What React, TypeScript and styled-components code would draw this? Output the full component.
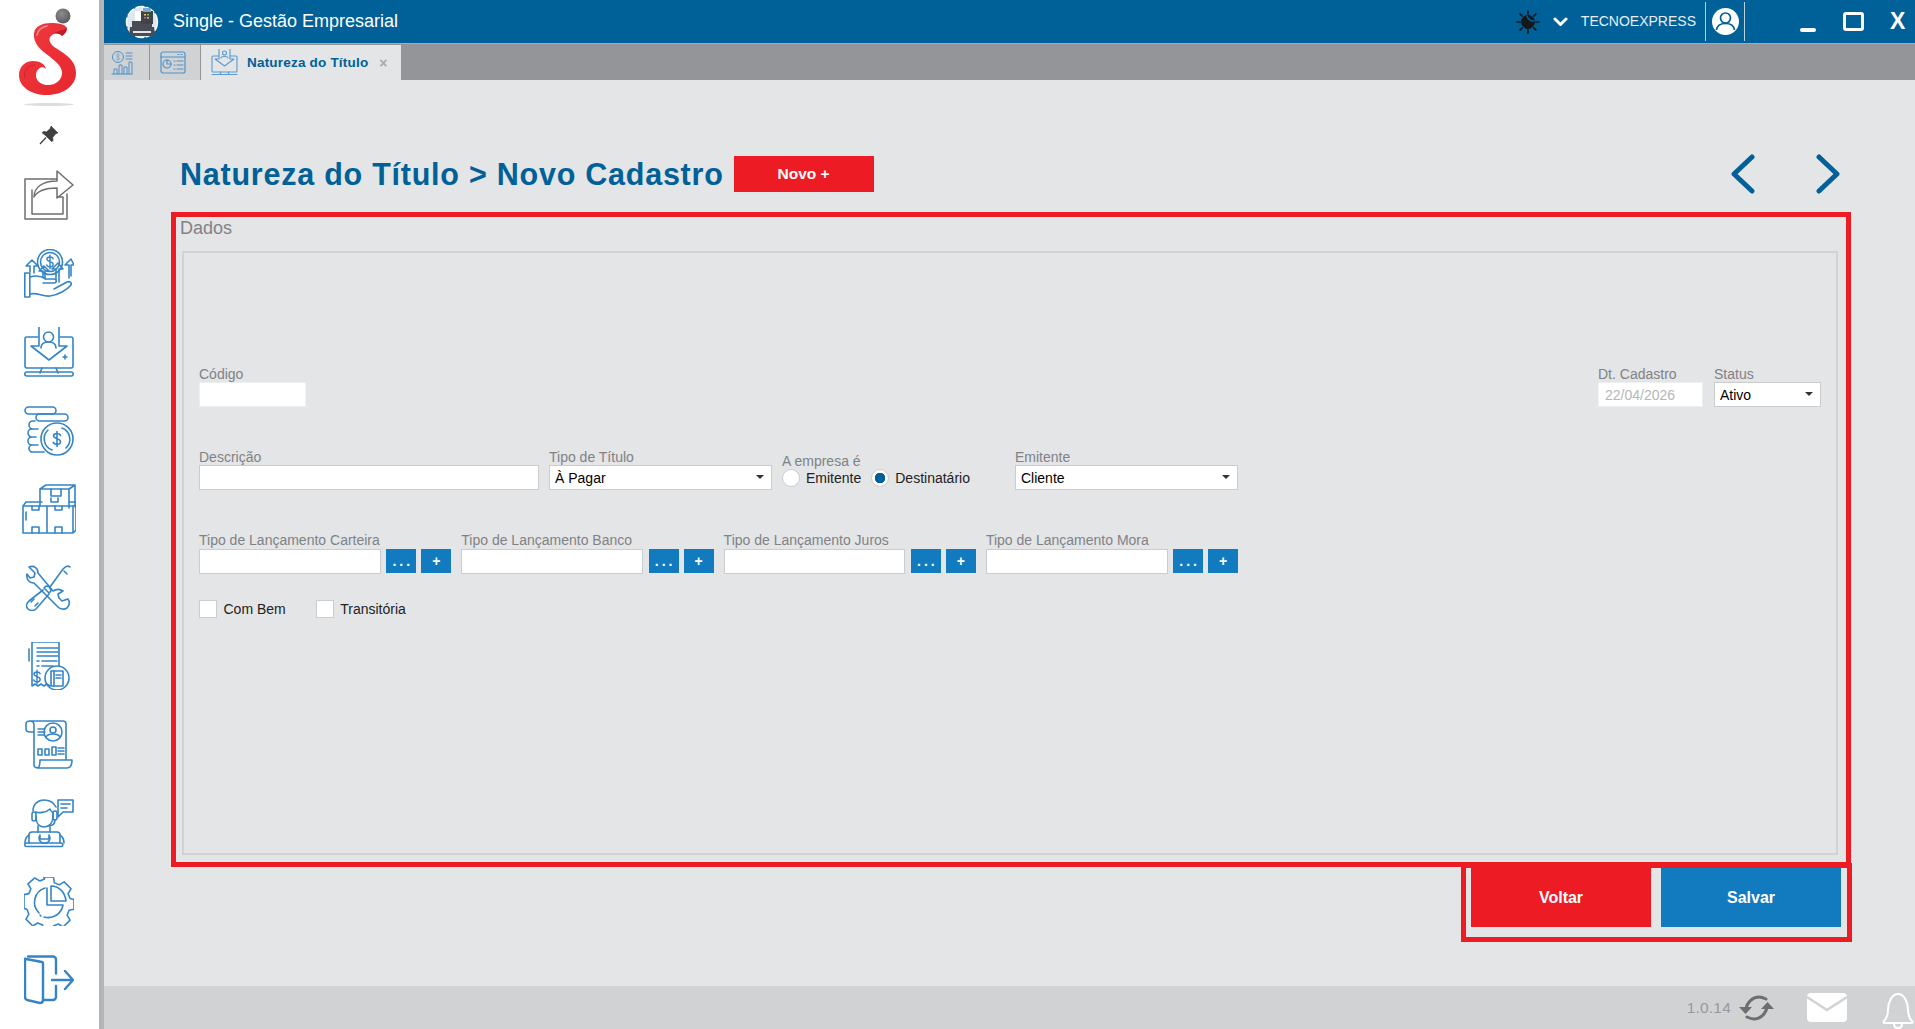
import styled, { createGlobalStyle } from "styled-components";
import { ReactNode } from "react";

const COLORS = {
  header: "#006098",
  tabs: "#939598",
  page: "#e4e5e7",
  footer: "#d1d2d4",
  red: "#ed1c24",
  blue: "#127bc0",
  icon: "#3585c6",
  label: "#808285",
  line: "#cbccce",
};

function LineIcon({ w = 50, h = 50, color = COLORS.icon, sw = 1.6, children }: { w?: number; h?: number; color?: string; sw?: number; children: ReactNode }) {
  return (
    <svg width={w} height={h} viewBox={`0 0 ${w} ${h}`} fill="none" stroke={color} strokeWidth={sw} strokeLinecap="round" strokeLinejoin="round">
      {children}
    </svg>
  );
}

function Dollar({ x, y, s = 1 }: { x: number; y: number; s?: number }) {
  return (
    <path transform={`translate(${x} ${y}) scale(${s})`} d="M3.5-3.5C3-5 1.5-5.5 0-5.5-2-5.5-3.5-4.500-3.500-3-3.500-.5 3.500-.5 3.500 2.500 3.500 4.200 2 5.500 0 5.500-1.800 5.500-3.200 4.800-3.700 3.300M0-7.500V7.500" />
  );
}

const LogoS = () => (
  <svg width="60" height="90" viewBox="20 8 60 90">
    <defs>
      <linearGradient id="sred" x1="0" y1="0" x2="1" y2="1">
        <stop offset="0" stopColor="#ee3a40" />
        <stop offset="1" stopColor="#e8262d" />
      </linearGradient>
      <radialGradient id="sdot" cx="0.4" cy="0.35" r="0.7">
        <stop offset="0" stopColor="#8c8d8f" />
        <stop offset="1" stopColor="#58595b" />
      </radialGradient>
    </defs>
    <circle cx="64" cy="16" r="7.5" fill="url(#sdot)" />
    <path
      fill="url(#sred)"
      d="M35 33C36 26 44 23 52 23 59 23 66 24 68 28 68 31 66 34 63 36 60 33 56 33 53 35 49 38 50 42 54 46 62 52 77 58 77 73 77 86 64 95 48 95 32 95 20 87 20 75 20 67 26 61 34 61 41 61 46 64 47 69 44 66 40 67 38 71 35 76 38 84 47 85 56 86 63 80 63 73 63 66 56 61 50 56 42 50 34 44 35 33Z"
    />
    <path fill="#a81a20" opacity="0.7" d="M53 35C56 32 60 31 64 30 66 29 67 28 68 28 68 31 66 34 63 36 60 33 56 33 53 35Z" />
    <path fill="none" stroke="#f7a0a3" strokeWidth="1.500" strokeLinecap="round" opacity="0.8" d="M38 35C39 30 43 27 48 26" />
    <path fill="none" stroke="#b81d23" strokeWidth="1.200" opacity="0.45" d="M26 78C24 71 29 65 36 65" />
  </svg>
);

const PinIcon = () => (
  <svg width="20" height="20" viewBox="0 0 20 20" fill="#404042" stroke="#404042">
    <path strokeWidth="0.6" d="M12 1l7 7-2 .6-3.200 3.600.2 3.400-1.200 1.200-3.400-3.400-3.200-3.200L3 7.800l1.200-1.200 3.400.2 3.600-3.200z" />
    <path strokeWidth="1.300" d="M7 12.500L1 19" />
  </svg>
);

const ShareIcon = () => (
  <LineIcon color="#6d6e71" sw={1.5}>
    <path d="M33 9H1v40h42V24" />
    <path d="M8 20v24h31V27h-5" />
    <path d="M10 27C10 17 19 11 33 11V1l16 14-16 13V18C22 18 14 20 10 27Z" />
  </LineIcon>
);

const HandIcon = () => (
  <LineIcon>
    <circle cx="26" cy="13" r="12.500" />
    <circle cx="26" cy="13" r="9.500" />
    <Dollar x={26} y={13} s={0.9} />
    <path d="M6 23v-6H2l6-6 6 6h-4v7M19 28v-6h-4l5-5 5 5h-4v8M32 30V20h-4l6-6 5 6h-4v13M45 29V16h-4l6-6 3 6h-3v11" />
    <rect x="0.800" y="24" width="5" height="24" />
    <path d="M6 28c6-2 11-1 16 2h8c3 0 3 4 0 4H19M6 45c8-2 12 3 20 2 8-1 17-6 21-11 1-3-2-4-4-3l-13 7" />
  </LineIcon>
);

const MonitorIcon = () => (
  <LineIcon>
    <path d="M14 10H3a2 2 0 0 0-2 2v27a2 2 0 0 0 2 2h44a2 2 0 0 0 2-2V12a2 2 0 0 0-2-2H36" />
    <path d="M15 0v19H7l18 14 18-14h-8V0" />
    <circle cx="24.500" cy="10" r="5" />
    <path d="M17 21c0-4 3-6 7.500-6S32 17 32 21" />
    <path d="M41 28v4M39 30h4M18 41l-2 5M32 41l2 5" />
    <rect x="0.800" y="45" width="48.400" height="4" rx="2" />
  </LineIcon>
);

const CoinsIcon = () => (
  <LineIcon>
    <rect x="1" y="1" width="31" height="7" rx="3.500" />
    <rect x="12" y="8" width="32" height="7" rx="3.500" />
    <path d="M11 15H9a3.500 3.500 0 0 0 0 8h5M8 23a3.500 3.500 0 0 0 0 8h4M8 31a3.500 3.500 0 0 0 0 8h6M8 39a3.500 3.500 0 0 0 1 7h11" />
    <circle cx="33" cy="33" r="16" />
    <path d="M24 24a12 12 0 0 0 4 20M42 42a12 12 0 0 0-4-20" />
    <Dollar x={33} y={33} s={1} />
  </LineIcon>
);

const BoxesIcon = () => (
  <LineIcon w={54}>
    <path d="M20 22V5h29v19M20 5l6-4h29M49 5l6-4v22" transform="translate(-2 0)" />
    <path d="M29 5v7h10V5" />
    <path d="M1 22h24v27H1zM25 22h26v27H25zM51 49l3-3V21l-3 1M1 22l3-4h16M47 18h7" />
    <path d="M10 22v4h7v-4M33 22v4h7v-4M10 49v-6h7v6M33 49v-6h7v6M29 14v4h7v-4M4 28v8" />
  </LineIcon>
);

const ToolsIcon = () => (
  <LineIcon w={46} h={46}>
    <path d="M3 2l6 6-1 4-4 1-3-4C0 14 3 18 8 18l24 24c2 2 6 3 9 1 3-3 3-6 1-9l-6 2-3-3-1-4 5-3c-3-2-7-2-10 0L12 8c0-5-4-8-9-6Z" />
    <path d="M44 2l-2-1c-2 0-4 2-5 3L24 22l-4-1-2 2 5 5 2-2-1-3M17 25L3 36c-3 3-3 6-1 8s6 2 8 0l13-15" />
    <path d="M8 34l-3 3M12 38l-3 3M38 6l3 3" />
  </LineIcon>
);

const ReceiptIcon = () => (
  <LineIcon w={42} h={48}>
    <path d="M4 0h27v24M4 0v44l3-2 3 2 3-2 3 2 3-2 3 2" />
    <path d="M1 7v12M9 6h21M9 10h21M9 14h21M9 19h2M14 19h15M9 24h2M14 24h11" />
    <Dollar x={9} y={35} s={0.9} />
    <circle cx="29" cy="36" r="12" />
    <rect x="23" y="29" width="12" height="15" />
    <path d="M26 29v15M28 33h5M28 36h5" />
  </LineIcon>
);

const ReportIcon = () => (
  <LineIcon w={48} h={49}>
    <path d="M6 1h32a3 3 0 0 1 3 3v35M1 4c0-2 2-3 4-3s4 1 4 4v40c0 3 3 3 5 3h28c3 0 5-3 5-8H15c0 3 0 8-3 8M1 4v5c0 2 2 3 4 3h3" />
    <circle cx="28" cy="12" r="9" />
    <circle cx="28" cy="10" r="3" />
    <path d="M21 17c2-4 12-4 14 0M13 9h7M13 12h7M13 15h6" />
    <rect x="13" y="29" width="4" height="6" />
    <rect x="20" y="29" width="4" height="6" />
    <rect x="27" y="27" width="4" height="8" />
    <path d="M33 28h6M33 31h6M33 34h6" />
  </LineIcon>
);

const SupportIcon = () => (
  <LineIcon h={49}>
    <path d="M9 12c0-7 5-11 11-11s10 3 12 7" />
    <rect x="8" y="13" width="4" height="9" rx="2" />
    <rect x="29" y="12" width="4" height="9" rx="2" />
    <path d="M12 13c2 1 10 1 14-3 1 2 2 3 3 4v4c0 6-4 10-9 10s-8-4-8-10" />
    <path d="M31 21c0 4-3 6-7 6" />
    <path d="M14 27v6M26 28v5" />
    <path d="M34 1h15v12H39l-5 5z" />
    <path d="M37 5h9M37 9h6" />
    <path d="M5 44V36a3 3 0 0 1 3-3h25a3 3 0 0 1 3 3v8" />
    <path d="M1 44c0-3 1-6 4-8M40 44c0-3-1-6-4-8" />
    <rect x="0.800" y="44" width="38" height="3.500" rx="1.700" />
    <path d="M16 36l-1 3c0 3 2 4 3 5h5c1-1 3-2 3-5l-1-3v4h-9z" />
  </LineIcon>
);

const GearIcon = () => (
  <LineIcon h={49}>
    <path d="M20 1h10l1 6 5 2 5-3 7 7-3 5 2 5 4 1v10l-5 1-2 5 3 5-7 7-5-3-5 2-1 4H20l-1-5-5-2-5 3-7-7 3-5-2-5-3-1V19l5-1 2-5-3-5 7-6 5 3 5-2z" transform="translate(0 -1) scale(0.98)" />
    <path d="M21 11a15 15 0 0 0-6 25M20 40a15 15 0 0 0 19-12H23V11" />
    <path d="M27 9c8 0 14 6 15 15H27z" />
    <path d="M16 38l1 1" />
  </LineIcon>
);

const DoorIcon = () => (
  <LineIcon sw={2.400}>
    <path d="M4 1.500h25a3 3 0 0 1 3 3v14M32 31v11a3 3 0 0 1-3 3h-10" />
    <path d="M2 4l16 3c.7 0 1 1 1 2v36c0 2-1 3-3 3L3 45c-1-.5-2-1-2-3V5c0-1 0-2 1-1Z" />
    <path d="M28 25h21M41 16l8 9-8 9" />
  </LineIcon>
);

const GlobeFax = () => (
  <svg width="34" height="34" viewBox="0 0 34 34">
    <circle cx="17" cy="17" r="15.500" fill="#dfe7ee" stroke="#fff" strokeWidth="1.500" strokeDasharray="9 2" />
    <path d="M5 22h24l1 8a1 1 0 0 1-1 1H5a1 1 0 0 1-1-1z" fill="#484d54" />
    <rect x="7" y="16" width="20" height="7" fill="#484d54" />
    <rect x="16" y="6" width="12" height="13" fill="#3f444a" />
    <rect x="18" y="3" width="8" height="4" fill="#7fa9cb" />
    <rect x="10" y="6" width="6" height="10" fill="#fff" />
    <rect x="19" y="9" width="2" height="1.500" fill="#f2c84b" />
    <rect x="22" y="9" width="2" height="1.500" fill="#7dbf5a" />
    <rect x="19" y="12" width="2" height="1.500" fill="#e55" />
    <rect x="22" y="12" width="2" height="1.500" fill="#f2c84b" />
    <rect x="8" y="26" width="18" height="2" fill="#e4e5e7" />
  </svg>
);

const TabChart = () => (
  <LineIcon w={22} h={24} color="#4f93c9" sw={1}>
    <circle cx="7" cy="6" r="5.500" />
    <Dollar x={7} y={6} s={0.5} />
    <path d="M15 2h6M15 5h6M15 8h6M1 23h20M3 23v-5h3v5M8 23v-9h3v9M13 23v-7h3v7M18 23V11h3v12" />
  </LineIcon>
);

const TabWindow = () => (
  <LineIcon w={26} h={23} color="#4f93c9" sw={1.200}>
    <rect x="1" y="1" width="24" height="21" rx="2" />
    <path d="M1 6h24M18 3.500h1M21 3.500h1" />
    <circle cx="7" cy="13" r="4" />
    <path d="M7 9v4h4M14 10h1M17 10h6M14 14h1M17 14h6M14 18h1M17 18h6" />
  </LineIcon>
);

const TabMail = () => (
  <LineIcon w={27} h={27} color="#5b9bcf" sw={1.100}>
    <path d="M8 7H2a1 1 0 0 0-1 1v14a1 1 0 0 0 1 1h23a1 1 0 0 0 1-1V8a1 1 0 0 0-1-1h-6" />
    <path d="M8 0v10H4l9.500 7L23 10h-4V0" />
    <circle cx="13.500" cy="4" r="2" />
    <path d="M10 9c0-2 7-2 7 0M10 23l-1 2M17 23l1 2M1 25.500h25" />
  </LineIcon>
);

const ThemeIcon = () => (
  <svg width="24" height="24" viewBox="0 0 24 24" stroke="#14181c" strokeWidth="1.700" strokeLinecap="round" fill="#14181c">
    <path d="M12 1v3M12 20v3M1 12h3M20 12h3M4.200 4.200l2 2M17.800 17.800l2 2M4.200 19.800l2-2M17.800 6.200l2-2" />
    <circle cx="12" cy="12" r="6.500" strokeWidth="1" />
    <path d="M11 6c1 3 3 5 7 5" stroke={COLORS.header} strokeWidth="1.500" fill="none" />
  </svg>
);

const ChevronDown = () => (
  <svg width="15" height="10" viewBox="0 0 15 10" fill="none" stroke="#fff" strokeWidth="3" strokeLinecap="round" strokeLinejoin="round">
    <path d="M2 2l5.500 5.500L13 2" />
  </svg>
);

const UserIcon = () => (
  <svg width="27" height="27" viewBox="0 0 27 27">
    <circle cx="13.500" cy="13.500" r="13.500" fill="#fff" />
    <circle cx="13.500" cy="10" r="5" fill="none" stroke={COLORS.header} strokeWidth="1.700" />
    <path d="M4.500 22c.5-4 4-6.500 9-6.500s8.500 2.500 9 6.500" fill="none" stroke={COLORS.header} strokeWidth="1.700" />
  </svg>
);

const NavArrow = ({ flip }: { flip?: boolean }) => (
  <svg width="24" height="40" viewBox="0 0 24 40" fill="none" stroke={COLORS.header} strokeWidth="5" strokeLinecap="round" strokeLinejoin="round">
    <path d={flip ? "M3 3l18 17L3 37" : "M21 3L3 20l18 17"} />
  </svg>
);

const SyncIcon = () => (
  <svg width="35" height="28" viewBox="0 0 35 28" fill="#6d6e71" stroke="none">
    <path d="M7 15C8 8 14 3 20 3c3 0 5 1 7 2" fill="none" stroke="#6d6e71" strokeWidth="3" strokeLinecap="round" />
    <path d="M0 13h13l-6.500 7z" />
    <path d="M28 13c-1 7-7 12-13 12-3 0-5-1-7-2" fill="none" stroke="#6d6e71" strokeWidth="3" strokeLinecap="round" />
    <path d="M22 15h13l-6.500-7z" />
  </svg>
);

const MailIcon = () => (
  <svg width="40" height="29" viewBox="0 0 40 29">
    <rect width="40" height="29" rx="4" fill="#fff" />
    <path d="M0 4l20 13L40 4" fill="none" stroke={COLORS.footer} strokeWidth="2.500" />
  </svg>
);

const BellIcon = () => (
  <svg width="34" height="38" viewBox="0 0 34 38" fill="none" stroke="#fff" strokeWidth="2">
    <path d="M3 29c3-3 4-6 4-11 0-8 4-16 10-16s10 8 10 16c0 5 1 8 4 11 1 1 1 2-1 2H4c-2 0-2-1-1-2Z" />
    <path d="M13 32c0 3 2 4 4 4s4-1 4-4" />
  </svg>
);

const SIDE_ICONS = [HandIcon, MonitorIcon, CoinsIcon, BoxesIcon, ToolsIcon, ReceiptIcon, ReportIcon, SupportIcon, GearIcon, DoorIcon];
const LANCAMENTOS = ["Carteira", "Banco", "Juros", "Mora"];

export default function App() {
  return (
    <Shell>
      <GlobalStyle />
      <Sidebar>
        <LogoWrap>
          <LogoS />
          <LogoShadow />
        </LogoWrap>
        <SideDivider />
        <PinSlot>
          <PinIcon />
        </PinSlot>
        <SideList>
          <SideItem>
            <ShareIcon />
          </SideItem>
          {SIDE_ICONS.map((Icon, i) => (
            <SideItem key={i}>
              <Icon />
            </SideItem>
          ))}
        </SideList>
      </Sidebar>
      <Main>
        <Header>
          <AppLogo>
            <GlobeFax />
          </AppLogo>
          <AppTitle>Single - Gestão Empresarial</AppTitle>
          <HeaderRight>
            <ThemeIcon />
            <ChevronSlot>
              <ChevronDown />
            </ChevronSlot>
            <CompanyName>TECNOEXPRESS</CompanyName>
            <UserBox>
              <UserIcon />
            </UserBox>
            <WindowButtons>
              <MinimizeBar />
              <MaximizeBox />
              <CloseMark>X</CloseMark>
            </WindowButtons>
          </HeaderRight>
        </Header>
        <TabBar>
          <IconTab $width={45} $pad={10}>
            <TabChart />
          </IconTab>
          <IconTab $width={50} $pad={4}>
            <TabWindow />
          </IconTab>
          <ActiveTab>
            <TabMail />
            <TabLabel>Natureza do Título</TabLabel>
            <TabClose>×</TabClose>
          </ActiveTab>
        </TabBar>
        <Content>
          <TitleRow>
            <Title>Natureza do Título &gt; Novo Cadastro</Title>
            <NewButton>Novo +</NewButton>
            <NavArrows>
              <NavArrow />
              <NavArrow flip />
            </NavArrows>
          </TitleRow>
          <DataBox>
            <Legend>Dados</Legend>
            <FieldBox>
              <TopRow>
                <Field $width={107}>
                  <Label>Código</Label>
                  <PlainInput $borderless />
                </Field>
                <TopRight>
                  <Field $width={105}>
                    <Label>Dt. Cadastro</Label>
                    <PlainInput $borderless disabled value="22/04/2026" readOnly />
                  </Field>
                  <Field $width={107}>
                    <Label>Status</Label>
                    <SelectBox>Ativo<Caret /></SelectBox>
                  </Field>
                </TopRight>
              </TopRow>
              <MiddleRow>
                <Field $width={340}>
                  <Label>Descrição</Label>
                  <PlainInput />
                </Field>
                <Field $width={223}>
                  <Label>Tipo de Título</Label>
                  <SelectBox>À Pagar<Caret /></SelectBox>
                </Field>
                <RadioField>
                  <Label>A empresa é</Label>
                  <RadioRow>
                    <RadioDot />
                    <RadioText>Emitente</RadioText>
                    <RadioDot $checked />
                    <RadioText>Destinatário</RadioText>
                  </RadioRow>
                </RadioField>
                <Field $width={223}>
                  <Label>Emitente</Label>
                  <SelectBox>Cliente<Caret /></SelectBox>
                </Field>
              </MiddleRow>
              <LookupRow>
                {LANCAMENTOS.map((tipo) => (
                  <Field key={tipo} $width={252.3}>
                    <LookupLabel>Tipo de Lançamento {tipo}</LookupLabel>
                    <LookupControls>
                      <PlainInput />
                      <MiniButton>
                        <Dots>...</Dots>
                      </MiniButton>
                      <MiniButton>+</MiniButton>
                    </LookupControls>
                  </Field>
                ))}
              </LookupRow>
              <CheckRow>
                <CheckItem>
                  <CheckBox />
                  Com Bem
                </CheckItem>
                <CheckItem>
                  <CheckBox />
                  Transitória
                </CheckItem>
              </CheckRow>
            </FieldBox>
          </DataBox>
          <ActionBox>
            <ActionButton $bg={COLORS.red}>Voltar</ActionButton>
            <ActionButton $bg={COLORS.blue}>Salvar</ActionButton>
          </ActionBox>
        </Content>
        <Footer>
          <Version>1.0.14</Version>
          <SyncIcon />
          <MailSlot>
            <MailIcon />
          </MailSlot>
          <BellSlot>
            <BellIcon />
          </BellSlot>
        </Footer>
      </Main>
    </Shell>
  );
}

const GlobalStyle = createGlobalStyle`
  html, body {
    margin: 0;
    padding: 0;
    overflow: hidden;
    background: ${COLORS.page};
  }
  * {
    box-sizing: border-box;
  }
`;

const Shell = styled.div`
  display: flex;
  width: 1915px;
  height: 1029px;
  overflow: hidden;
  font-family: "Liberation Sans", Arial, sans-serif;
`;

const Sidebar = styled.aside`
  flex: 0 0 104px;
  display: flex;
  flex-direction: column;
  align-items: center;
  padding-right: 2px;
  background: #fff;
  border-right: 5px solid #b3b4b6;
`;

const LogoWrap = styled.div`
  display: flex;
  flex-direction: column;
  align-items: center;
  height: 108px;
  padding-top: 8px;
`;

const LogoShadow = styled.div`
  width: 50px;
  height: 3px;
  margin-top: 5px;
  border-radius: 50%;
  background: #dcddde;
`;

const SideDivider = styled.div`
  width: 60px;
  height: 1px;
  margin-top: 7px;
  background: #d5d6d8;
`;

const PinSlot = styled.div`
  display: flex;
  height: 20px;
  margin-top: 12px;
`;

const SideList = styled.div`
  display: flex;
  flex-direction: column;
  align-items: center;
  margin-top: 25px;
`;

const SideItem = styled.div`
  display: flex;
  align-items: center;
  justify-content: center;
  width: 60px;
  height: 50px;
  margin-bottom: 28.500px;
`;

const Main = styled.div`
  flex: 1;
  display: flex;
  flex-direction: column;
  min-width: 0;
`;

const Header = styled.header`
  flex: 0 0 43px;
  display: flex;
  align-items: center;
  padding-left: 21px;
  background: ${COLORS.header};
  color: #fff;
`;

const AppLogo = styled.div`
  display: flex;
  width: 34px;
  height: 34px;
`;

const AppTitle = styled.div`
  margin-left: 14px;
  font-size: 18px;
`;

const HeaderRight = styled.div`
  display: flex;
  align-items: center;
  margin-left: auto;
  height: 100%;
`;

const ChevronSlot = styled.div`
  display: flex;
  margin-left: 13px;
`;

const CompanyName = styled.div`
  margin-left: 13px;
  margin-top: -2px;
  font-size: 14px;
  color: #e8edf2;
`;

const UserBox = styled.div`
  display: flex;
  align-items: center;
  justify-content: center;
  width: 40px;
  height: 39px;
  margin-left: 9px;
  border-left: 1px solid #b9cfde;
  border-right: 1px solid #b9cfde;
`;

const WindowButtons = styled.div`
  display: flex;
  align-items: center;
  width: 170px;
  padding-left: 55px;
`;

const MinimizeBar = styled.div`
  width: 16px;
  height: 4px;
  margin-top: 16px;
  border-radius: 2px;
  background: #fff;
`;

const MaximizeBox = styled.div`
  width: 21px;
  height: 19px;
  margin-left: 27px;
  border: 3px solid #fff;
  border-radius: 3px;
`;

const CloseMark = styled.div`
  margin-left: 26px;
  font-size: 23px;
  font-weight: 700;
  line-height: 1;
`;

const TabBar = styled.nav`
  flex: 0 0 37px;
  display: flex;
  align-items: flex-end;
  gap: 1px;
  background: ${COLORS.tabs};
  border-top: 1px solid #a7a9ac;
`;

const IconTab = styled.div<{ $width: number; $pad: number }>`
  display: flex;
  align-items: center;
  justify-content: center;
  width: ${(p) => p.$width}px;
  height: 35px;
  padding-right: ${(p) => p.$pad}px;
  background: #d1d2d4;
`;

const ActiveTab = styled.div`
  display: flex;
  align-items: center;
  width: 200px;
  height: 35px;
  padding-left: 10px;
  background: ${COLORS.page};
`;

const TabLabel = styled.span`
  margin-left: 9px;
  font-size: 13.500px;
  font-weight: 700;
  letter-spacing: 0.2px;
  color: ${COLORS.header};
`;

const TabClose = styled.span`
  margin-left: 11px;
  font-size: 14px;
  font-weight: 700;
  color: #a7a9ac;
`;

const Content = styled.main`
  flex: 1;
  display: flex;
  flex-direction: column;
  background: ${COLORS.page};
`;

const TitleRow = styled.div`
  display: flex;
  align-items: center;
  height: 40px;
  margin-top: 74px;
  padding-left: 76px;
  padding-right: 75px;
`;

const Title = styled.h1`
  margin: 0;
  font-size: 30.500px;
  font-weight: 700;
  letter-spacing: 0.760px;
  color: ${COLORS.header};
`;

const NewButton = styled.button`
  width: 140px;
  height: 36px;
  margin-left: 10px;
  border: 0;
  background: ${COLORS.red};
  color: #fff;
  font-family: inherit;
  font-size: 15.500px;
  font-weight: 700;
`;

const NavArrows = styled.div`
  display: flex;
  gap: 61px;
  margin-left: auto;
`;

const DataBox = styled.section`
  display: flex;
  flex-direction: column;
  width: 1680px;
  height: 655px;
  margin-top: 18px;
  margin-left: 67px;
  padding: 0 8px 7px 6px;
  border: 5px solid ${COLORS.red};
`;

const Legend = styled.div`
  flex: 0 0 34px;
  margin-left: -2px;
  padding-top: 1px;
  font-size: 18px;
  color: ${COLORS.label};
`;

const FieldBox = styled.div`
  flex: 1;
  padding: 113px 15px 0 15px;
  border: 2px solid #d1d2d4;
`;

const TopRow = styled.div`
  display: flex;
  justify-content: space-between;
`;

const TopRight = styled.div`
  display: flex;
  gap: 11px;
`;

const MiddleRow = styled.div`
  display: flex;
  gap: 10px;
  margin-top: 42px;
`;

const LookupRow = styled.div`
  display: flex;
  gap: 10px;
  margin-top: 43px;
`;

const Field = styled.div<{ $width: number }>`
  display: flex;
  flex-direction: column;
  width: ${(p) => p.$width}px;
`;

const Label = styled.label`
  height: 16px;
  font-size: 14px;
  line-height: 17px;
  white-space: nowrap;
  color: ${COLORS.label};
`;

const LookupLabel = styled(Label)`
  line-height: 15px;
`;

const PlainInput = styled.input<{ $borderless?: boolean }>`
  width: 100%;
  min-width: 0;
  height: 25px;
  padding: 0 6px;
  border: 1px solid ${(p) => (p.$borderless ? "#eeeff0" : COLORS.line)};
  background: #fff;
  font-family: inherit;
  font-size: 14px;
  color: #b5b6b8;
  outline: none;
  &:disabled {
    background: #fff;
  }
`;

const SelectBox = styled.div`
  position: relative;
  width: 100%;
  height: 25px;
  padding-left: 5px;
  border: 1px solid ${COLORS.line};
  background: #fff;
  font-size: 14px;
  line-height: 24px;
  color: #000;
`;

const Caret = styled.span`
  position: absolute;
  top: 9px;
  right: 7px;
  border-top: 4px solid #333;
  border-left: 4px solid transparent;
  border-right: 4px solid transparent;
`;

const RadioField = styled.div`
  display: flex;
  flex-direction: column;
  width: 223px;
  padding-top: 4px;
`;

const RadioRow = styled.div`
  display: flex;
  align-items: center;
  height: 18px;
`;

const RadioDot = styled.span<{ $checked?: boolean }>`
  flex: 0 0 18px;
  width: 18px;
  height: 18px;
  border: 1px solid ${COLORS.line};
  border-radius: 50%;
  background: ${(p) => (p.$checked ? `radial-gradient(circle, ${COLORS.header} 0 5px, #fff 5.500px)` : "#fff")};
`;

const RadioText = styled.span`
  margin-left: 6px;
  margin-right: 10px;
  font-size: 14px;
  color: #222;
`;

const LookupControls = styled.div`
  display: flex;
  gap: 5px;
  & > input {
    flex: 1;
    margin-right: 0.500px;
  }
`;

const MiniButton = styled.button`
  flex: 0 0 30px;
  height: 24px;
  padding: 0;
  border: 0;
  background: ${COLORS.blue};
  color: #fff;
  font-family: inherit;
  font-size: 14px;
  font-weight: 700;
`;

const Dots = styled.span`
  letter-spacing: 3px;
  margin-left: 3px;
`;

const CheckRow = styled.div`
  display: flex;
  gap: 30px;
  margin-top: 26px;
`;

const CheckItem = styled.label`
  display: flex;
  align-items: center;
  gap: 6.500px;
  font-size: 14px;
  color: #222;
`;

const CheckBox = styled.span`
  width: 18px;
  height: 18px;
  border: 1px solid ${COLORS.line};
  background: #fff;
`;

const ActionBox = styled.div`
  display: flex;
  gap: 10px;
  width: 391px;
  height: 79px;
  margin-top: -4px;
  margin-left: auto;
  margin-right: 63px;
  padding: 0 6px 10px 5px;
  border: 5px solid ${COLORS.red};
`;

const ActionButton = styled.button<{ $bg: string }>`
  flex: 0 0 180px;
  border: 0;
  background: ${(p) => p.$bg};
  color: #fff;
  font-family: inherit;
  font-size: 16px;
  font-weight: 700;
`;

const Footer = styled.footer`
  flex: 0 0 43px;
  display: flex;
  align-items: center;
  justify-content: flex-end;
  background: ${COLORS.footer};
  overflow: hidden;
`;

const Version = styled.span`
  margin-right: 8px;
  font-size: 15.500px;
  letter-spacing: 0.2px;
  color: #97989b;
`;

const MailSlot = styled.div`
  display: flex;
  margin-left: 33px;
`;

const BellSlot = styled.div`
  display: flex;
  margin-left: 34px;
  margin-bottom: -6px;
`;
